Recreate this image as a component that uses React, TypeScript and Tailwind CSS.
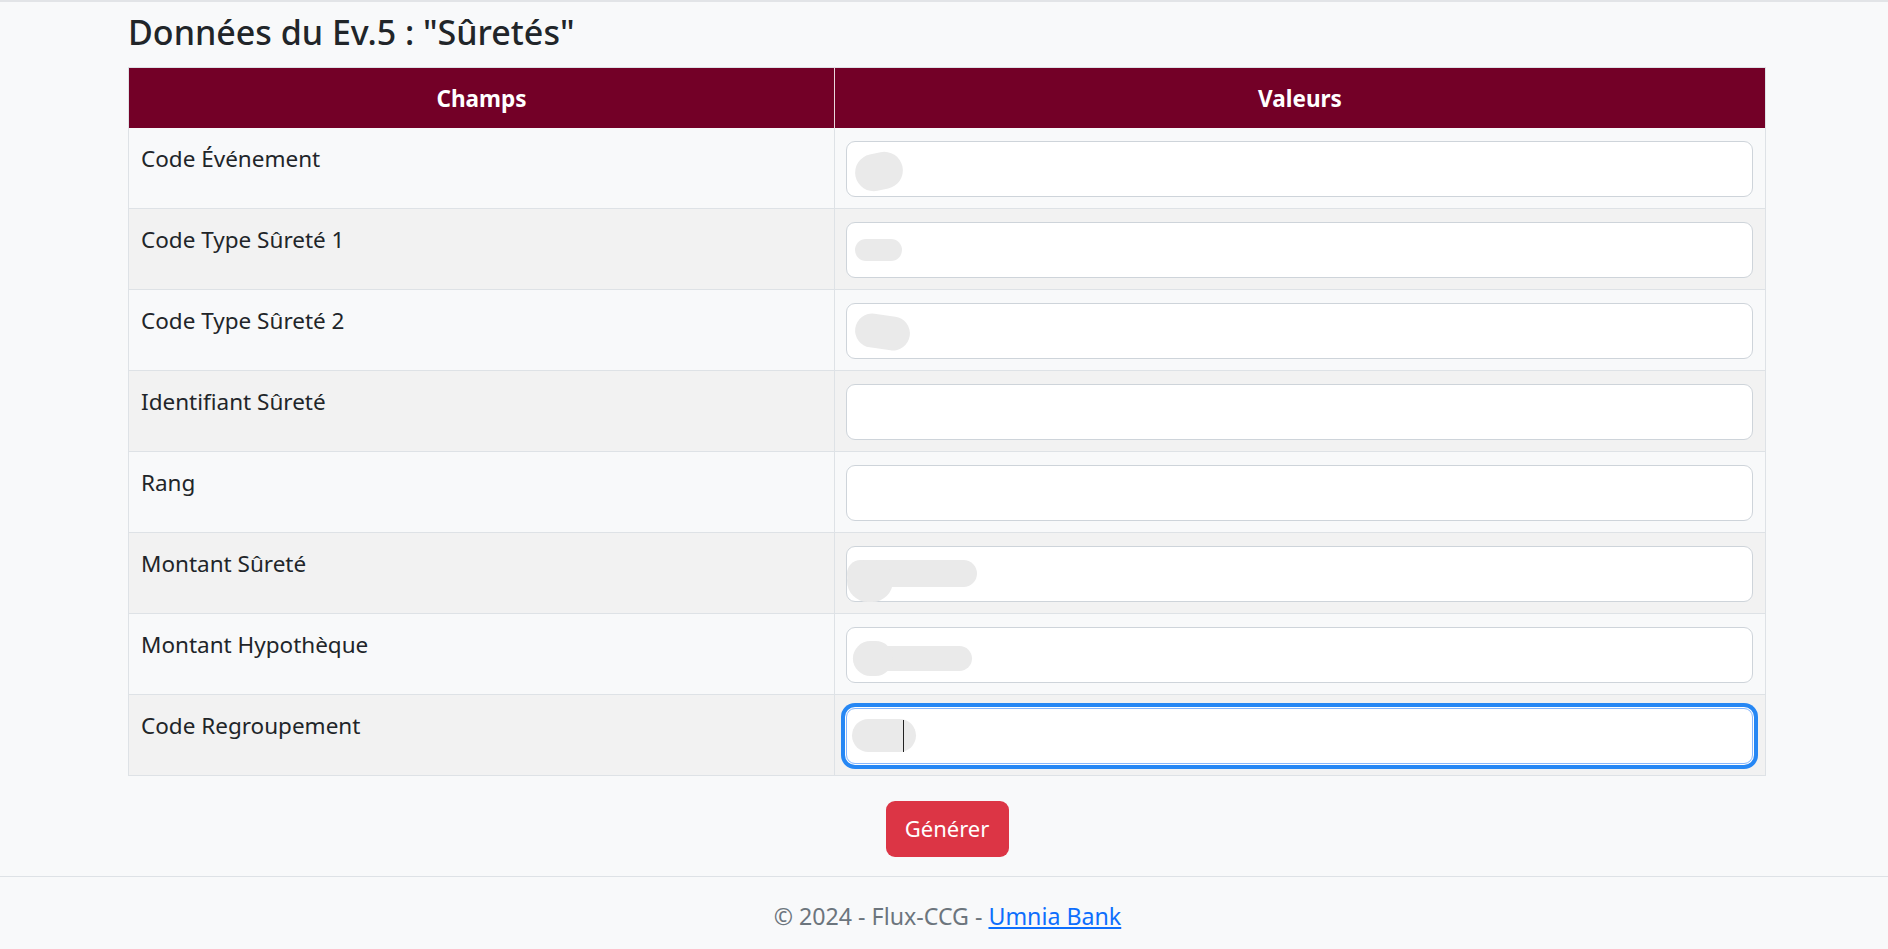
import React from "react";

type Blob = { l: number; t: number; w: number; h: number; rot?: number };
type Row = { label: string; blobs: Blob[]; focused?: boolean };

const rows: Row[] = [
  { label: "Code Événement", blobs: [{ l: 9, t: 12, w: 48, h: 37, rot: -12 }] },
  { label: "Code Type Sûreté 1", blobs: [{ l: 9, t: 17, w: 47, h: 22 }] },
  { label: "Code Type Sûreté 2", blobs: [{ l: 9, t: 12, w: 55, h: 34, rot: 8 }] },
  { label: "Identifiant Sûreté", blobs: [] },
  { label: "Rang", blobs: [] },
  {
    label: "Montant Sûreté",
    blobs: [
      { l: 1, t: 14, w: 130, h: 27 },
      { l: 1, t: 14, w: 46, h: 42 },
    ],
  },
  {
    label: "Montant Hypothèque",
    blobs: [
      { l: 7, t: 19, w: 119, h: 25 },
      { l: 7, t: 14, w: 40, h: 35 },
    ],
  },
  { label: "Code Regroupement", blobs: [{ l: 6, t: 11, w: 64, h: 33 }], focused: true },
];

export default function App() {
  return (
    <div className="min-h-[949px] bg-[#f8f9fa] border-t-2 border-[#e2e4e7] font-['Noto_Sans','Open_Sans',sans-serif] text-[#212529]">
      <main className="w-[1638px] ml-[128px]">
        <h2 className="text-[34px] leading-[40px] font-medium pt-[10px] pb-[15px] m-0">
          Données du Ev.5 : "Sûretés"
        </h2>
        <table className="w-full table-fixed border-collapse border border-[#dee2e6]">
          <colgroup>
            <col className="w-[706px]" />
            <col />
          </colgroup>
          <thead>
            <tr className="bg-[#730027] text-white h-[60px]">
              <th className="text-[22.5px] font-bold text-center pt-[2px] border-r border-[#e9d6dc]">Champs</th>
              <th className="text-[22.5px] font-bold text-center pt-[2px]">Valeurs</th>
            </tr>
          </thead>
          <tbody>
            {rows.map((r, i) => (
              <tr
                key={r.label}
                className={`${i % 2 === 0 ? "bg-[#f8f9fa]" : "bg-[#f2f2f2]"} border-b border-[#dee2e6]`}
              >
                <td className="align-top px-[12px] pt-[15px] pb-[9px] text-[22.5px] leading-[32px] border-r border-[#dee2e6]">
                  {r.label}
                </td>
                <td className="align-top pl-[11px] pr-[12px] pt-[13px] pb-[11px]">
                  <div className="relative h-[56px]">
                    <input
                      readOnly
                      value=""
                      className={`w-full h-[56px] rounded-[9px] bg-white outline-none border ${
                        r.focused
                          ? "border-[#86b7fe] shadow-[0_0_0_1px_#ffffff,0_0_0_5px_#2687f4]"
                          : "border-[#ced4da]"
                      }`}
                    />
                    {r.blobs.map((b, j) => (
                      <div
                        key={j}
                        className="absolute rounded-full bg-[#eaeaea]"
                        style={{
                          left: b.l,
                          top: b.t,
                          width: b.w,
                          height: b.h,
                          transform: b.rot ? `rotate(${b.rot}deg)` : undefined,
                        }}
                      />
                    ))}
                    {r.focused && (
                      <div className="absolute left-[57px] top-[12px] w-px h-[32px] bg-[#222]" />
                    )}
                  </div>
                </td>
              </tr>
            ))}
          </tbody>
        </table>
        <div className="flex justify-center pt-[25px] pb-[19px]">
          <button className="w-[123px] h-[56px] rounded-[9px] bg-[#dc3545] text-white text-[22px]">
            Générer
          </button>
        </div>
      </main>
      <footer className="border-t border-[#dee2e6] h-[73px] flex items-center justify-center pt-[7px] pl-[7px] text-[23.2px] text-[#6c757d]">
        <span>
          © 2024 - Flux-CCG - <a className="text-[#0d6efd] underline">Umnia Bank</a>
        </span>
      </footer>
    </div>
  );
}
